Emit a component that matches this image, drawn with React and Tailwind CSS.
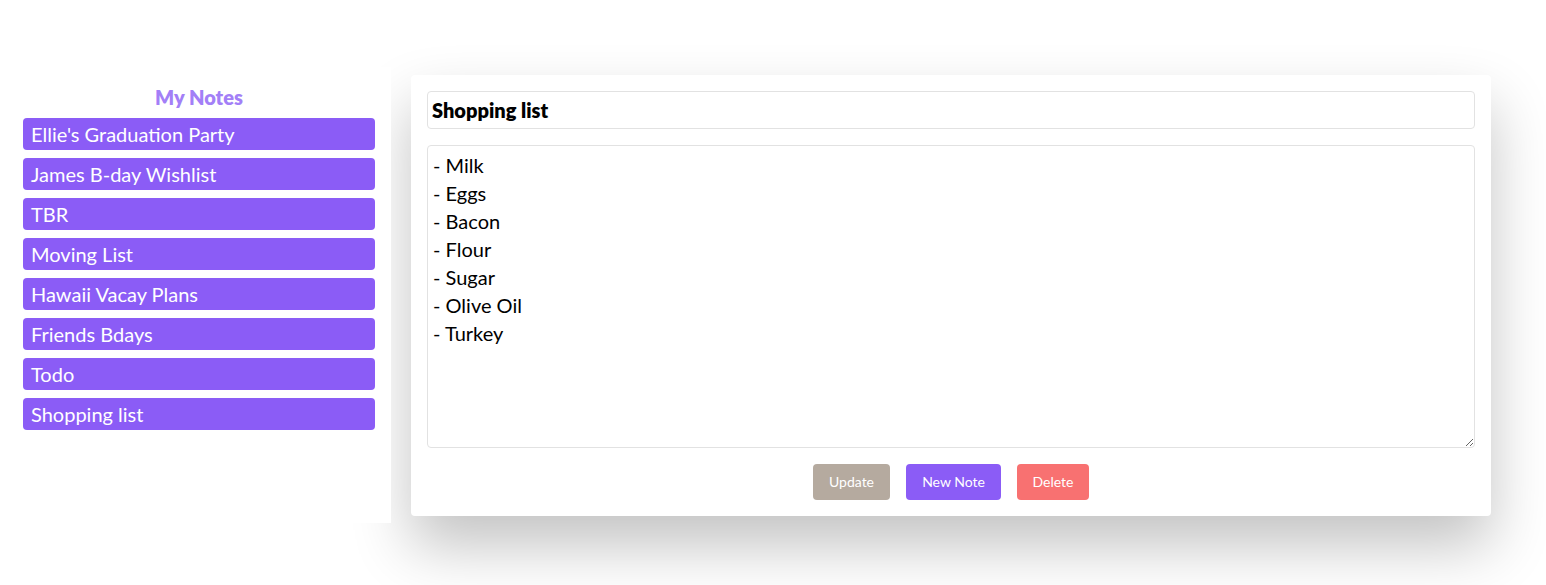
const notes = [
  "Ellie's Graduation Party",
  "James B-day Wishlist",
  "TBR",
  "Moving List",
  "Hawaii Vacay Plans",
  "Friends Bdays",
  "Todo",
  "Shopping list",
]

const body = `- Milk
- Eggs
- Bacon
- Flour
- Sugar
- Olive Oil
- Turkey`

export default function App() {
  return (
    <div className="min-h-screen flex items-start gap-5 pt-[67px] pr-[55px] font-['Lato',sans-serif]">
      {/* sidebar */}
      <div className="relative z-10 w-[391px] h-[456px] shrink-0 bg-white pl-[23px] pr-[16px] pt-[18px]">
        <h2 className="text-center text-[20px] leading-[25px] font-extrabold text-[#a37ff7] mb-[8px]">My Notes</h2>
        <div className="flex flex-col gap-2">
          {notes.map((n) => (
            <div key={n} className="h-8 rounded bg-[#8b5cf6] px-2 text-[20px] leading-8 text-white">
              {n}
            </div>
          ))}
        </div>
      </div>

      {/* editor */}
      <div className="mt-2 flex-1 rounded bg-white p-4 shadow-[0_30px_60px_0_rgba(0,0,0,0.24)]">
        <input
          defaultValue="Shopping list"
          className="w-full h-[38px] rounded border border-[#e2e2e2] px-[4px] text-[20px] font-extrabold text-black outline-none"
        />
        <textarea
          defaultValue={body}
          className="mt-4 block w-full h-[303px] rounded border border-[#e2e2e2] px-[5px] py-[5px] text-[20px] leading-[28px] text-black outline-none"
        />
        <div className="mt-4 flex justify-center gap-4">
          <button className="h-9 w-[77px] rounded bg-[#b5aa9f] text-sm text-white">Update</button>
          <button className="h-9 w-[95px] rounded bg-[#8b5cf6] text-sm text-white">New Note</button>
          <button className="h-9 w-[72px] rounded bg-[#f87171] text-sm text-white">Delete</button>
        </div>
      </div>
    </div>
  )
}
